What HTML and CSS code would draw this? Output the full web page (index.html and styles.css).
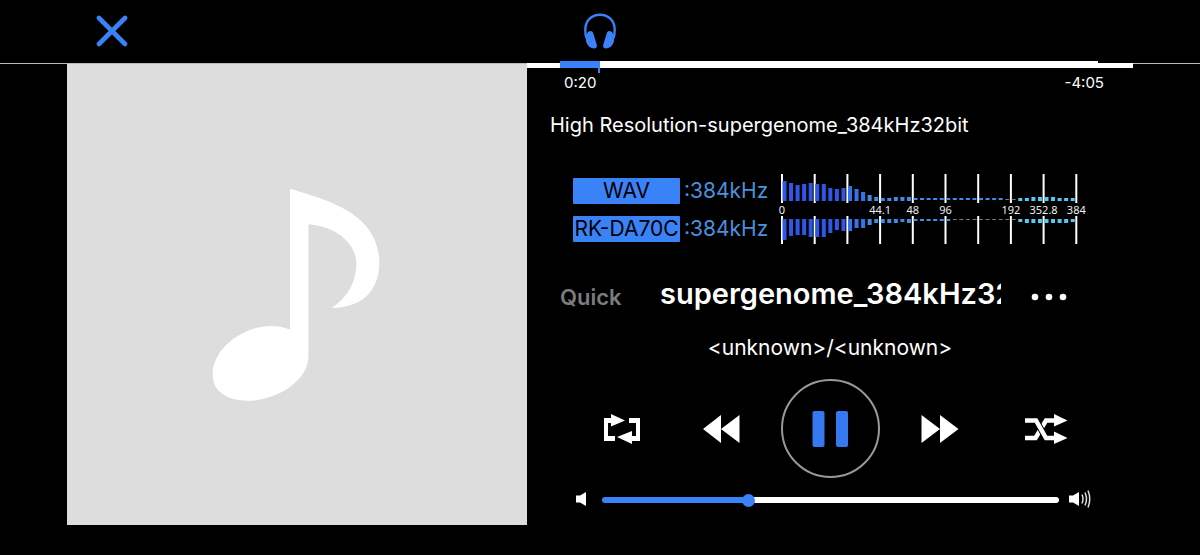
FILE: index.html
```html
<!DOCTYPE html>
<html lang="en">
<head>
<meta charset="utf-8">
<meta name="viewport" content="width=device-width, initial-scale=1">
<title>Music player</title>
<link rel="stylesheet" href="styles.css">
</head>
<body>
<header class="topbar">
  <button class="icon-button close" type="button" aria-label="Close">
    <svg width="32" height="32" viewBox="0 0 32 32"><path d="M3 3L29 29M29 3L3 29" stroke="#3a82f7" stroke-width="4.600" stroke-linecap="round"/></svg>
  </button>
  <button class="icon-button output" type="button" aria-label="Headphones">
    <svg width="32" height="36" viewBox="0 0 32 36" fill="#3a82f7">
      <path d="M2.500 25C1 21 1.200 18 1.400 15C2 7 8 1.700 16 1.700S30 7 30.600 15C30.800 18 31 21 29.500 25" fill="none" stroke="#3a82f7" stroke-width="2.400"/>
      <path d="M4 19Q8 16.500 9.200 20L12.800 32Q13.500 35.500 9.500 35.500Q4 34.500 2.200 29Q1 23 4 19Z"/>
      <path d="M28 19Q24 16.500 22.800 20L19.200 32Q18.500 35.500 22.500 35.500Q28 34.500 29.800 29Q31 23 28 19Z"/>
    </svg>
  </button>
</header>
<main class="player">
  <section class="artwork">
    <svg class="note" viewBox="0 0 461 461" fill="#fff" role="img" aria-label="No artwork">
      <path d="M223.500 124.500C252 133 280 141 298 160C309 172 313 186 313 199C313 220 302 244 265 244C281 234 289 219 290 202C291 177 267 162 242 160V292C242 318 209 337 181 337C161 337 146 328 146 311C146 282 180 262 204 262Q214 262 223.500 265.500Z"/>
    </svg>
  </section>
  <section class="panel">
    <div class="rail"><input class="seek" type="range" min="0" max="265" value="19" aria-label="Position"></div>
    <div class="times"><span>0:20</span><span>-4:05</span></div>
    <p class="filename">High Resolution-supergenome_384kHz32bit</p>
    <div class="signal">
      <dl class="formats">
        <dt>WAV</dt><dd>:384kHz</dd>
        <dt>RK-DA70C</dt><dd>:384kHz</dd>
      </dl>
      <svg class="spectrum" viewBox="0 0 314 72" role="img" aria-label="Spectrum in kHz"></svg>
    </div>
    <div class="track">
      <button class="quick" type="button">Quick</button>
      <h1 class="title">supergenome_384kHz32bit</h1>
      <button class="icon-button" type="button" aria-label="More">
        <svg width="38" height="10" viewBox="0 0 38 10" fill="#fff"><circle cx="5" cy="5" r="3.300"/><circle cx="19" cy="5" r="3.300"/><circle cx="33" cy="5" r="3.300"/></svg>
      </button>
    </div>
    <p class="artist">&lt;unknown&gt;/&lt;unknown&gt;</p>
    <div class="controls">
      <button class="icon-button" type="button" aria-label="Repeat">
        <svg width="38" height="32" viewBox="0 0 38 32" fill="#fff"><path d="M8 4V1L22 7.500L8 13.500V10H5V23H12V28H1V5H8ZM26 5H37V28H29V31L14 24L29 18V23H33V10H26Z"/></svg>
      </button>
      <button class="icon-button" type="button" aria-label="Rewind">
        <svg width="38" height="30" viewBox="0 0 38 30" fill="#fff"><path d="M18 1V29L0 15ZM36.500 1V29L18 15Z"/></svg>
      </button>
      <button class="icon-button pause" type="button" aria-label="Pause">
        <svg width="38" height="36" viewBox="0 0 38 36" fill="#3578f0"><rect x="0.500" width="12" height="36" rx="2"/><rect x="24" width="12" height="36" rx="2"/></svg>
      </button>
      <button class="icon-button" type="button" aria-label="Fast forward">
        <svg width="38" height="30" viewBox="0 0 38 30" fill="#fff"><path d="M0.500 1V29L19 15ZM19 1V29L37.500 15Z"/></svg>
      </button>
      <button class="icon-button" type="button" aria-label="Shuffle">
        <svg width="46" height="32" viewBox="0 0 46 32"><path d="M1 25H11.500L22 7.500H31" fill="none" stroke="#fff" stroke-width="4.500"/><path d="M12 7.500L22 25" fill="none" stroke="#000" stroke-width="6.500"/><path d="M1 7.500H12L22 25H31" fill="none" stroke="#fff" stroke-width="4.500"/><path d="M30 1L43.500 7.500L30 13.500ZM30 18.500L43.500 25L30 31Z" fill="#fff"/></svg>
      </button>
    </div>
    <div class="volume">
      <svg width="10" height="16" viewBox="0 0 10 16" fill="#fff"><path d="M0 4.500H4L10 1V15L4 11.500H0Z"/></svg>
      <input class="level" type="range" min="0" max="200" value="63" aria-label="Volume">
      <svg width="22" height="20" viewBox="0 0 22 20" fill="#fff"><path d="M0 6.500H4L10 3V17L4 13.500H0Z"/><path d="M13 5.500Q15 10 13 14.500M16 3.500Q19 10 16 16.500M19 1.500Q22.500 10 19 18.500" fill="none" stroke="#ddd" stroke-width="1.500"/></svg>
    </div>
  </section>
</main>
<script src="script.js"></script>
</body>
</html>
```
FILE: styles.css
```css
* { box-sizing: border-box; }
body {
  margin: 0;
  background: #000;
  color: #fff;
  font-family: Inter, "Liberation Sans", sans-serif;
}
button {
  border: 0;
  padding: 0;
  background: none;
  color: inherit;
  font-family: inherit;
}
.icon-button { display: grid; place-items: center; }
.topbar {
  display: grid;
  grid-template-columns: 1fr auto 1fr;
  align-items: center;
  height: 64px;
  padding-bottom: 1px;
  border-bottom: 1px solid #bbb;
}
.close { justify-self: start; margin-left: 96px; }
.player {
  display: grid;
  grid-template-columns: 460fr 606fr;
  align-items: start;
  padding: 0 67px;
}
.artwork { aspect-ratio: 460 / 461; background: #ddd; margin-bottom: 24px; }
.note { display: block; width: 100%; height: 100%; }
.panel { min-width: 0; }
.rail { height: 5px; margin-top: -1px; background: #fff; display: flex; padding: 0 35px 0 33px; }
input[type="range"] { appearance: none; min-width: 0; flex: 1; }
input.seek {
  height: 7px;
  margin: -2px 0 0;
  background: linear-gradient(to right, #3a82f7 7%, #fff 7%);
}
.seek::-webkit-slider-thumb {
  appearance: none;
  width: 2px;
  height: 12px;
  margin-top: 5px;
  background: #3a82f7;
}
.times {
  display: flex;
  justify-content: space-between;
  padding: 5px 29px 0 37px;
  font-size: 15px;
  line-height: 20px;
}
.filename { margin: 19px 23px 0; font-size: 20px; line-height: 26px; white-space: nowrap; }
.signal { display: flex; align-items: center; margin-top: 35px; padding-left: 46px; }
.formats {
  display: grid;
  grid-template-columns: 107px auto;
  gap: 12px 4px;
  margin: 2px 0 0;
  width: 202px;
  flex: none;
  font-size: 21px;
  line-height: 26px;
}
.formats dt { background: #3a82f7; color: #000; text-align: center; border-radius: 1px; white-space: nowrap; }
.formats dd { margin: 0; color: #4a90dc; }
.spectrum { flex: none; width: 314px; height: 72px; }
.tick-label { fill: #eee; font: 11px "Noto Sans", sans-serif; text-anchor: middle; }
.track {
  display: grid;
  grid-template-columns: 100px minmax(0, 1fr) 38px;
  align-items: center;
  padding: 0 65px 0 33px;
  margin-top: 29px;
}
.quick { justify-self: start; color: #7c7c7c; font-size: 22px; font-weight: 600; line-height: 28px; padding-top: 6px; }
.title { margin: 0 29px 0 0; overflow: hidden; white-space: nowrap; font-size: 29px; font-weight: 600; line-height: 40px; }
.track .icon-button { padding-top: 6px; }
.artist { margin: 20px 0 0; text-align: center; font-size: 21px; line-height: 28px; }
.controls {
  display: grid;
  grid-template-columns: 100fr 100fr 117fr 102fr 111fr;
  place-items: center;
  padding: 0 31px 0 45px;
  margin-top: 17px;
}
.pause { width: 99px; height: 99px; border: 2px solid #999; border-radius: 50%; }
.volume { display: flex; align-items: center; padding: 0 42px 0 49px; margin-top: 11px; }
input.level {
  height: 6px;
  margin: 2px 10px 0 16px;
  border-radius: 3px;
  background: linear-gradient(to right, #3a82f7 32%, #fff 32%);
}
.level::-webkit-slider-thumb {
  appearance: none;
  width: 13px;
  height: 13px;
  border-radius: 50%;
  background: #3a82f7;
}
```
FILE: script.js
```js
const upper = [20,18,16,17,18,17,17,13,12,13,15,12,9,6,4,3,3,4,4,4,2,2,2,2,2,2,2,2,2,2,2,2,2,2,1,1,3,3,4,4,4,4,3,3,3];
const lower = [21,17,16,16,18,18,18,14,11,12,12,9,9,6,4,4,4,4,3,4,2,2,2,2,2,2,1,1,1,1,1,1,1,1,1,1,3,4,4,4,4,4,4,4,3];
const labels = ["0", "", "", "44.1", "48", "96", "", "192", "352.8", "384"];
const svg = document.querySelector(".spectrum");

function add(name, attrs, text) {
  const node = document.createElementNS("http://www.w3.org/2000/svg", name);
  for (const key in attrs) node.setAttribute(key, attrs[key]);
  if (text) node.textContent = text;
  svg.append(node);
}

function barColor(i, height) {
  if (height === 1) return "#777";
  if (i > 35) return "#56c8f5";
  if (i > 12) return "#408ce4";
  return i > 9 ? "#3474ea" : "#2d57e4";
}

labels.forEach((label, i) => {
  const x = 6 + i * 32.7;
  add("rect", { x, y: 1, width: 2, height: 29, fill: "#fff" });
  add("rect", { x, y: 43, width: 2, height: 28, fill: "#fff" });
  if (label) add("text", { x: x + 1, y: 41, class: "tick-label" }, label);
});
upper.forEach((h, i) => {
  const x = 7.5 + i * 6.55;
  const base = h < 3 ? 27 : 28;
  add("rect", { x, y: base - h, width: 4, height: h, fill: barColor(i, h) });
  add("rect", { x, y: 46, width: 4, height: lower[i], fill: barColor(i, lower[i]) });
});
```
